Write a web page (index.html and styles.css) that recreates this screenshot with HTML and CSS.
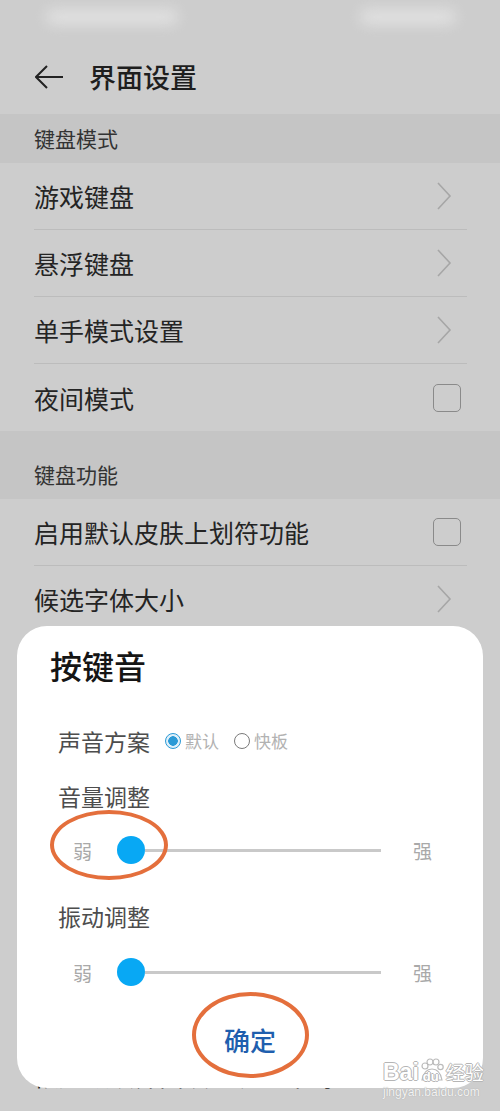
FILE: index.html
```html
<!DOCTYPE html>
<html>
  <head>
    <meta charset='utf-8'>
    <meta name="viewport" content="width=device-width,initial-scale=1.0">
    <title>界面设置</title>
    <link rel="stylesheet" href="styles.css">
  </head>
  <body>
    <div class="status">
      <span class="blur blur-left"></span>
      <span class="blur blur-right"></span>
    </div>
    <header class="topbar">
      <svg class="back" width="28" height="24" viewBox="0 0 28 24">
        <polyline points="12,1 1,12 12,23" fill="none" stroke="#222" stroke-width="2"/>
        <line x1="1" y1="12" x2="28" y2="12" stroke="#222" stroke-width="2"/>
      </svg>
      <h1>界面设置</h1>
    </header>

    <section>
      <h2 class="section-head">键盘模式</h2>
      <div class="row">
        <span>游戏键盘</span>
        <svg class="chevron" width="16" height="30" viewBox="0 0 16 30"><polyline points="2,2 14,15 2,28" fill="none" stroke="#a6a6a6" stroke-width="1.6"/></svg>
      </div>
      <div class="row">
        <span>悬浮键盘</span>
        <svg class="chevron" width="16" height="30" viewBox="0 0 16 30"><polyline points="2,2 14,15 2,28" fill="none" stroke="#a6a6a6" stroke-width="1.6"/></svg>
      </div>
      <div class="row">
        <span>单手模式设置</span>
        <svg class="chevron" width="16" height="30" viewBox="0 0 16 30"><polyline points="2,2 14,15 2,28" fill="none" stroke="#a6a6a6" stroke-width="1.6"/></svg>
      </div>
      <div class="row last">
        <span>夜间模式</span>
        <span class="check"></span>
      </div>
    </section>

    <section>
      <h2 class="section-head gap">键盘功能</h2>
      <div class="row">
        <span>启用默认皮肤上划符功能</span>
        <span class="check"></span>
      </div>
      <div class="row">
        <span>候选字体大小</span>
        <svg class="chevron" width="16" height="30" viewBox="0 0 16 30"><polyline points="2,2 14,15 2,28" fill="none" stroke="#a6a6a6" stroke-width="1.6"/></svg>
      </div>
      <!-- rows hidden behind the dialog -->
      <div class="covered"></div>
      <div class="row last"><span>恢复默认界面设置键盘布局</span></div>
    </section>

    <!-- key tone dialog -->
    <div class="dialog">
      <h3 class="dialog-title">按键音</h3>
      <div class="scheme">
        <span class="label">声音方案</span>
        <span class="radio on"></span><span class="opt">默认</span>
        <span class="radio"></span><span class="opt">快板</span>
      </div>
      <div class="label vol">音量调整</div>
      <div class="slider">
        <span class="end">弱</span>
        <span class="bar"><span class="thumb"></span><span class="track"></span></span>
        <span class="end strong">强</span>
      </div>
      <div class="label vib">振动调整</div>
      <div class="slider second">
        <span class="end">弱</span>
        <span class="bar"><span class="thumb"></span><span class="track"></span></span>
        <span class="end strong">强</span>
      </div>
      <div class="ok">确定</div>
      <span class="ring ring-slider"></span>
      <span class="ring ring-ok"></span>
    </div>

    <div class="mark">
      <div class="mark-logo">
        <span>Bai</span>
        <span class="paw-box">
          <svg class="paw" width="24" height="24" viewBox="0 0 24 24">
            <circle cx="5" cy="8" r="3" fill="none" stroke="#bbb" stroke-width="1.2"/>
            <circle cx="10" cy="4" r="3" fill="none" stroke="#bbb" stroke-width="1.2"/>
            <circle cx="16" cy="4" r="3" fill="none" stroke="#bbb" stroke-width="1.2"/>
            <circle cx="20.5" cy="9" r="2.7" fill="none" stroke="#bbb" stroke-width="1.2"/>
            <path d="M2 22 Q4 11 12 11 Q20 11 22 22 Z" fill="#fff" stroke="#bbb" stroke-width="1.2"/>
          </svg>
          <span class="du">du</span>
        </span>
        <span class="jy">经验</span>
      </div>
      <div class="mark-url">jingyan.baidu.com</div>
    </div>
  </body>
</html>
```

FILE: styles.css
```css
html, body, h1, h2, h3, section {
    margin: 0;
    padding: 0;
}
body {
    position: relative;
    width: 500px;
    height: 1111px;
    overflow: hidden;
    background-color: #cdcdcd;
    color: #242424;
    font-family: "Noto Sans CJK SC", "Noto Sans", sans-serif;
}
.status {
    height: 39px;
    display: flex;
    justify-content: space-between;
    align-items: center;
    padding: 0 44px 0 46px;
}
.blur {
    display: block;
    height: 14px;
    margin-top: -6px;
    background: #e8e8e8;
    border-radius: 7px;
    filter: blur(7px);
    opacity: .8;
}
.blur-left {
    width: 132px;
}
.blur-right {
    width: 96px;
}
.topbar {
    height: 75px;
    display: flex;
    align-items: center;
    padding-left: 35px;
}
.topbar h1 {
    margin-left: 26px;
    font-size: 27px;
    font-weight: 500;
    color: #1e1e1e;
}
.section-head {
    height: 49px;
    line-height: 49px;
    padding-left: 34px;
    font-size: 21px;
    font-weight: 400;
    color: #333;
    background-color: #c5c5c5;
}
.section-head.gap {
    box-sizing: border-box;
    height: 68px;
    padding-top: 18px;
    line-height: 50px;
}
.row {
    height: 66px;
    margin: 0 33px 0 34px;
    display: flex;
    align-items: center;
    justify-content: space-between;
    font-size: 25px;
    border-bottom: 1px solid #bcbcbc;
}
.row.last {
    border-bottom: none;
    height: 67px;
}
.covered {
    height: 408px;
}
.chevron {
    margin-right: 15px;
}
.check {
    box-sizing: border-box;
    width: 28px;
    height: 28px;
    margin-right: 6px;
    border: 1.5px solid #8a8a8a;
    border-radius: 5px;
}

/* dialog */
.dialog {
    position: absolute;
    left: 17px;
    top: 626px;
    width: 466px;
    height: 462px;
    background: #fff;
    border-radius: 30px;
}
.dialog-title {
    margin: 19px 0 0 33px;
    font-size: 32px;
    line-height: 40px;
    font-weight: 500;
    color: #151515;
}
.label {
    font-size: 23px;
    line-height: 30px;
    color: #4d4d4d;
    padding-left: 41px;
}
.scheme {
    margin-top: 41px;
    display: flex;
    align-items: center;
    line-height: 30px;
}
.scheme .label {
    margin-right: 15px;
}
.radio {
    box-sizing: border-box;
    width: 16px;
    height: 16px;
    border-radius: 50%;
    border: 1.5px solid #7a7a7a;
}
.radio.on {
    border: 1.5px solid #2b9ad6;
    background: radial-gradient(circle, #2b9ad6 0, #2b9ad6 4.5px, #dff0fa 5px);
}
.opt {
    margin: 0 15px 0 4px;
    font-size: 17px;
    color: #b2b2b2;
}
.vol {
    margin-top: 25px;
}
.slider {
    height: 40px;
    margin-top: 19px;
    padding-left: 56px;
    display: flex;
    align-items: center;
}
.slider.second {
    margin-top: 21px;
}
.vib {
    margin-top: 31px;
}
.end {
    font-size: 19px;
    color: #a9a9a9;
}
.bar {
    width: 264px;
    margin-left: 25px;
    display: flex;
    align-items: center;
}
.thumb {
    width: 28px;
    height: 28px;
    border-radius: 50%;
    background: #08a8f4;
}
.track {
    flex: 1;
    height: 3px;
    background: #c9c9c9;
}
.strong {
    margin-left: 32px;
}
.ok {
    margin-top: 28px;
    text-align: center;
    font-size: 26px;
    line-height: 40px;
    font-weight: 500;
    color: #1f5fae;
}
.ring {
    position: absolute;
    box-sizing: border-box;
    border: 4px solid #e46f3c;
    border-radius: 50%;
}
.ring-slider {
    left: 33px;
    top: 184px;
    width: 118px;
    height: 70px;
}
.ring-ok {
    left: 175px;
    top: 366px;
    width: 117px;
    height: 86px;
}

/* watermark */
.mark {
    position: absolute;
    left: 383px;
    top: 1056px;
    color: #fff;
    text-shadow: -1px 0 #b5b5b5, 1px 0 #b5b5b5, 0 -1px #b5b5b5, 0 1px #b5b5b5;
}
.mark-logo {
    display: flex;
    align-items: flex-end;
    height: 28px;
    font-family: "Liberation Sans", Arial, sans-serif;
    font-size: 23px;
    font-weight: 700;
    line-height: 24px;
}
.paw-box {
    position: relative;
    width: 24px;
    height: 26px;
    margin: 0 2px 0 1px;
}
.paw {
    display: block;
}
.du {
    position: absolute;
    left: 3px;
    bottom: 0;
    font-size: 13px;
    line-height: 14px;
}
.jy {
    font-family: "Noto Sans CJK SC", sans-serif;
    font-size: 19px;
    font-weight: 400;
    line-height: 24px;
}
.mark-url {
    font-family: "Liberation Sans", Arial, sans-serif;
    font-size: 12px;
    line-height: 16px;
    color: #f4f4f4;
    text-shadow: 0 0 1px #999;
}
```
